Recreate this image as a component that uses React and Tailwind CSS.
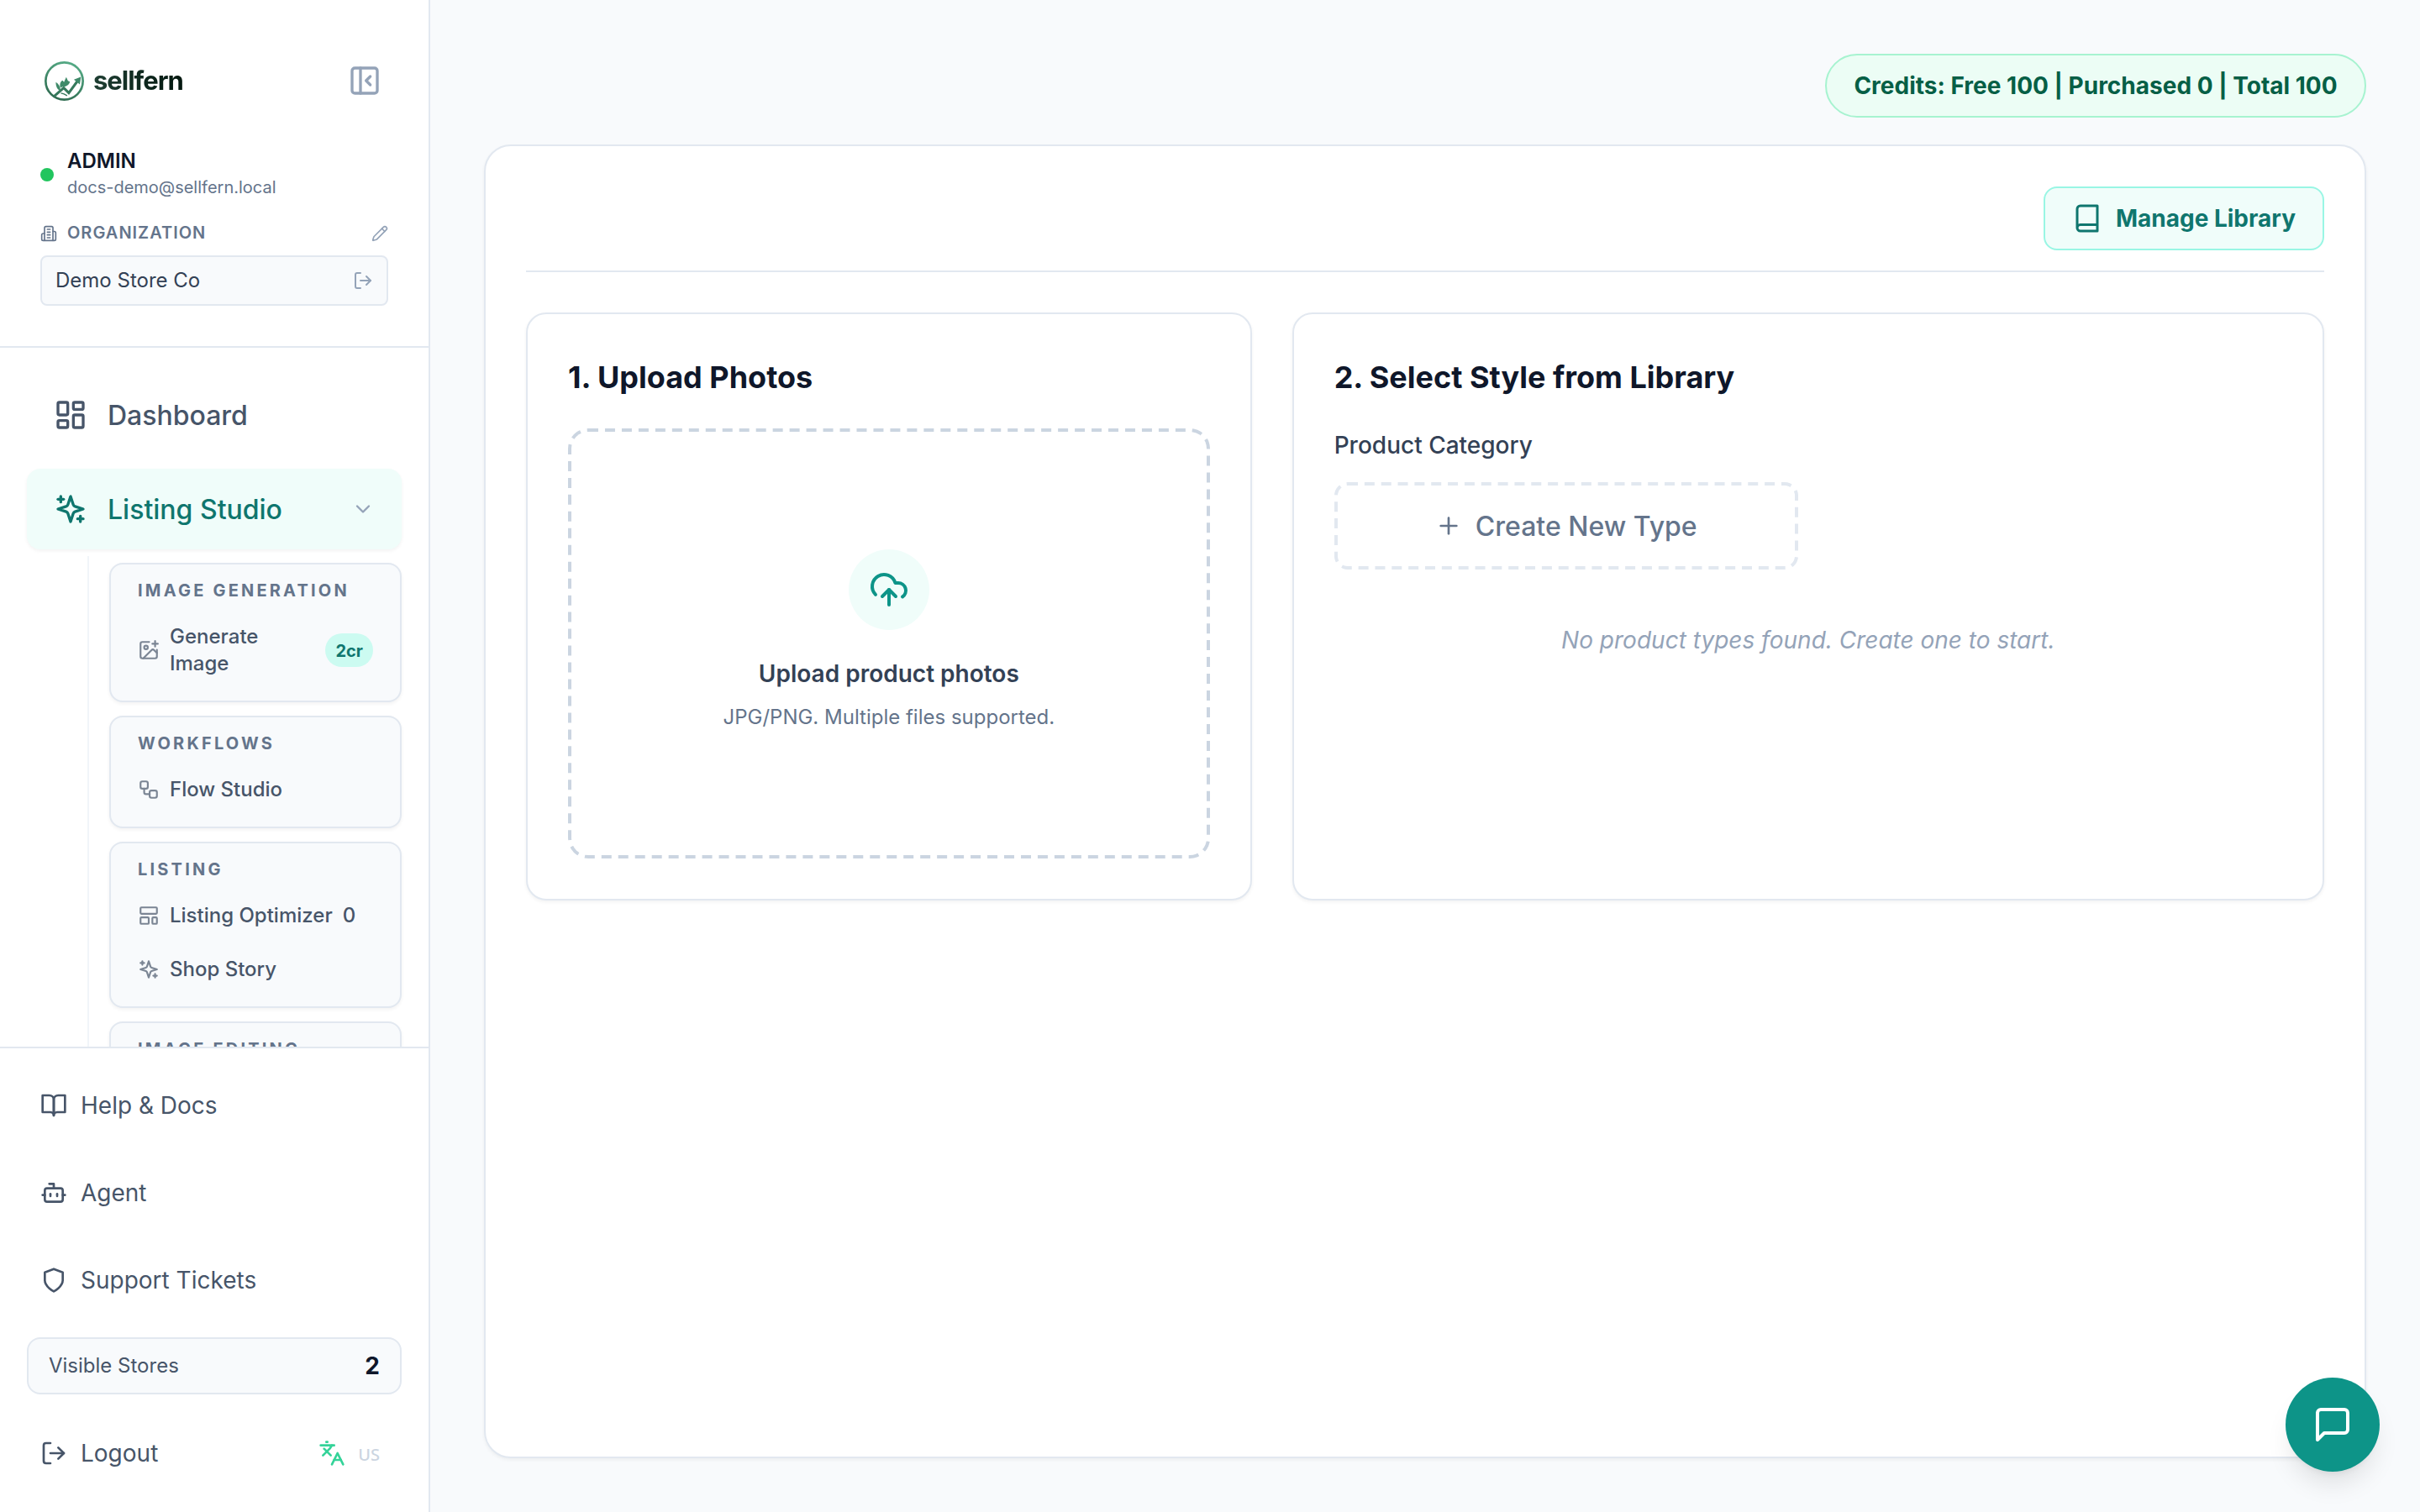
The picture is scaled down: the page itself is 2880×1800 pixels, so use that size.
import React from "react";
import {
  Bot,
  ChevronDown,
  ImagePlus,
  Languages,
  LayoutTemplate,
  LogOut,
  PanelLeftClose,
  Pencil,
  Plus,
  Workflow,
} from "lucide-react";

function Icon({ className, children }) {
  return (
    <svg
      viewBox="0 0 24 24"
      fill="none"
      stroke="currentColor"
      strokeWidth="2"
      strokeLinecap="round"
      strokeLinejoin="round"
      className={className}
    >
      {children}
    </svg>
  );
}

const DashboardIcon = ({ className }) => (
  <Icon className={className}>
    <rect width="7" height="9" x="3" y="3" rx="1" />
    <rect width="7" height="5" x="14" y="3" rx="1" />
    <rect width="7" height="9" x="14" y="12" rx="1" />
    <rect width="7" height="5" x="3" y="16" rx="1" />
  </Icon>
);

const SparklesIcon = ({ className }) => (
  <Icon className={className}>
    <path d="m12 3-1.912 5.813a2 2 0 0 1-1.275 1.275L3 12l5.813 1.912a2 2 0 0 1 1.275 1.275L12 21l1.912-5.813a2 2 0 0 1 1.275-1.275L21 12l-5.813-1.912a2 2 0 0 1-1.275-1.275L12 3Z" />
    <path d="M5 3v4" />
    <path d="M19 17v4" />
    <path d="M3 5h4" />
    <path d="M17 19h4" />
  </Icon>
);

const BuildingIcon = ({ className }) => (
  <Icon className={className}>
    <path d="M6 22V4a2 2 0 0 1 2-2h8a2 2 0 0 1 2 2v18Z" />
    <path d="M6 12H4a2 2 0 0 0-2 2v6a2 2 0 0 0 2 2h2" />
    <path d="M18 9h2a2 2 0 0 1 2 2v9a2 2 0 0 1-2 2h-2" />
    <path d="M10 6h4" />
    <path d="M10 10h4" />
    <path d="M10 14h4" />
    <path d="M10 18h4" />
  </Icon>
);

const BookOpenIcon = ({ className }) => (
  <Icon className={className}>
    <path d="M2 3h6a4 4 0 0 1 4 4v14a3 3 0 0 0-3-3H2z" />
    <path d="M22 3h-6a4 4 0 0 0-4 4v14a3 3 0 0 1 3-3h7z" />
  </Icon>
);

const ShieldIcon = ({ className }) => (
  <Icon className={className}>
    <path d="M12 22s8-4 8-10V5l-8-3-8 3v7c0 6 8 10 8 10" />
  </Icon>
);

const BookIcon = ({ className }) => (
  <Icon className={className}>
    <path d="M4 19.5v-15A2.5 2.5 0 0 1 6.5 2H20v20H6.5a2.5 2.5 0 0 1 0-5H20" />
  </Icon>
);

const UploadCloudIcon = ({ className }) => (
  <Icon className={className}>
    <path d="M4 14.899A7 7 0 1 1 15.71 8h1.79a4.5 4.5 0 0 1 2.5 8.242" />
    <path d="M12 12v9" />
    <path d="m16 16-4-4-4 4" />
  </Icon>
);

const MessageIcon = ({ className }) => (
  <Icon className={className}>
    <path d="M21 15a2 2 0 0 1-2 2H7l-4 4V5a2 2 0 0 1 2-2h14a2 2 0 0 1 2 2z" />
  </Icon>
);

function BrandMark() {
  return (
    <svg viewBox="0 0 140 140" className="size-[47px]" fill="none">
      <defs>
        <linearGradient id="fern" x1="0.7" y1="0" x2="0.3" y2="1">
          <stop offset="0" stopColor="#55ab86" />
          <stop offset="1" stopColor="#2f6b50" />
        </linearGradient>
      </defs>
      <circle cx="70" cy="70" r="66" stroke="url(#fern)" strokeWidth="8" />
      <path d="M34 124 L68 94 L86 112 L119 67" stroke="#36795c" strokeWidth="9" />
      <path d="M104 65 L129 55 L125 82 Z" fill="#3f8a69" />
      <path d="M40 74 C50 80 56 90 57 106 C45 100 40 90 40 74 Z" fill="#3f8a69" />
      <path d="M56 94 C53 82 56 72 64 68 L69 74 L77 56 L83 69 L90 72 C87 84 76 90 64 90 Z" fill="#3f8a69" />
      <path d="M58 113 L69 116 L80 122" stroke="#36795c" strokeWidth="4" />
    </svg>
  );
}

/* A 2px dashed outline drawn at double scale, so the dashes stay long and airy. */
function DashedOutline({ className }) {
  return (
    <span
      aria-hidden="true"
      className={
        "pointer-events-none absolute top-0 left-0 h-1/2 w-1/2 origin-top-left scale-200 border-2 border-dashed " +
        className
      }
    />
  );
}

function SubItem({ icon: I, children, trailing }) {
  return (
    <div className="flex items-center gap-3 px-5 py-4 text-[24px] leading-[32px] font-medium text-[#475569]">
      <I className="size-[26px] shrink-0 opacity-70" />
      <span>{children}</span>
      {trailing}
    </div>
  );
}

function Group({ title, children }) {
  return (
    <section className="rounded-2xl border-2 border-[#e2e8f0] bg-[#f8fafc] p-3 shadow-[0_2px_4px_rgba(0,0,0,0.05)]">
      <h3 className="px-5 pt-1 pb-2 text-[20px] leading-[30px] font-bold tracking-[0.16em] text-[#64748b]">
        {title}
      </h3>
      {children}
    </section>
  );
}

function FooterLink({ icon: I, children }) {
  return (
    <div className="flex h-[88px] items-center gap-4 px-4 text-[28px] leading-[40px] text-[#475569]">
      <I className="size-8 shrink-0" />
      <span>{children}</span>
    </div>
  );
}

function Sidebar() {
  return (
    <aside className="flex h-full w-[512px] shrink-0 flex-col border-r-2 border-[#e2e8f0] bg-white">
      <header className="h-[414px] shrink-0 border-b-2 border-[#e2e8f0] px-12 pt-[68px]">
        <div className="flex h-14 items-center justify-between">
          <div className="flex items-center gap-[11px] pl-[5px]">
            <BrandMark />
            <span className="bg-linear-to-r from-[#1f3f33] to-[#04170f] bg-clip-text text-[31px] leading-[40px] font-bold tracking-[-0.033em] text-transparent">
              sellfern
            </span>
          </div>
          <PanelLeftClose className="mr-2 size-10 text-[#94a3b8]" />
        </div>

        <div className="mt-[52px] flex h-16 items-center gap-4">
          <span className="size-4 rounded-full bg-[#22c55e]" />
          <div className="pb-0.5">
            <div className="text-[24px] leading-[32px] font-semibold text-[#0f172a]">ADMIN</div>
            <div className="text-[20px] leading-[30px] text-[#64748b]">docs-demo@sellfern.local</div>
          </div>
        </div>

        <div className="mt-[22px] flex h-8 items-center gap-3 text-[#64748b]">
          <BuildingIcon className="size-5" />
          <span className="pb-0.5 text-[20px] leading-[30px] font-semibold tracking-[0.05em]">ORGANIZATION</span>
          <Pencil className="ml-auto size-5 text-[#94a3b8]" />
        </div>

        <div className="mt-[10px] flex h-[60px] items-center justify-between rounded-lg border-2 border-[#e2e8f0] bg-[#f8fafc] px-4">
          <span className="text-[24px] leading-[32px] text-[#334155]">Demo Store Co</span>
          <LogOut className="size-6 text-[#94a3b8]" />
        </div>
      </header>

      <nav className="min-h-0 flex-1 overflow-hidden px-8 pt-8">
        <div className="flex h-24 items-center gap-6 px-8 text-[32px] leading-[48px] font-medium text-[#475569]">
          <DashboardIcon className="size-10" />
          <span className="pt-px">Dashboard</span>
        </div>
        <div className="mt-4 flex h-24 items-center gap-6 rounded-2xl bg-[#f0fdfa] px-8 text-[32px] leading-[48px] font-medium text-[#0f766e] shadow-[0_2px_4px_rgba(0,0,0,0.05)]">
          <SparklesIcon className="size-10" />
          <span className="pt-px">Listing Studio</span>
          <ChevronDown className="ml-auto size-7 text-[#94a3b8]" />
        </div>
        <div className="mt-2 ml-[72px] flex flex-col gap-4 border-l-2 border-[#f1f5f9] pt-2 pl-6">
          <Group title="IMAGE GENERATION">
            <SubItem
              icon={ImagePlus}
              trailing={
                <span className="ml-auto flex h-10 items-center rounded-full bg-[#ccfbf1] px-3 pt-0.5 text-[20px] leading-[30px] font-bold text-[#0f766e]">
                  2cr
                </span>
              }
            >
              Generate
              <br />
              Image
            </SubItem>
          </Group>
          <Group title="WORKFLOWS">
            <SubItem icon={Workflow}>Flow Studio</SubItem>
          </Group>
          <Group title="LISTING">
            <SubItem icon={LayoutTemplate} trailing={<span>0</span>}>
              Listing Optimizer
            </SubItem>
            <SubItem icon={SparklesIcon}>Shop Story</SubItem>
          </Group>
          <Group title="IMAGE EDITING" />
        </div>
      </nav>

      <footer className="h-[554px] shrink-0 border-t-2 border-[#e2e8f0] px-8 pt-6">
        <div className="flex flex-col gap-4">
          <FooterLink icon={BookOpenIcon}>Help &amp; Docs</FooterLink>
          <FooterLink icon={Bot}>Agent</FooterLink>
          <FooterLink icon={ShieldIcon}>Support Tickets</FooterLink>
        </div>
        <div className="mt-6 flex h-[68px] items-center justify-between rounded-2xl border-2 border-[#e2e8f0] bg-[#f8fafc] px-6">
          <span className="text-[24px] leading-[32px] text-[#475569]">Visible Stores</span>
          <span className="text-[28px] leading-[40px] font-bold text-[#0f172a]">2</span>
        </div>
        <div className="mt-[26px] flex items-center justify-between pr-[26px]">
          <FooterLink icon={LogOut}>Logout</FooterLink>
          <div className="flex items-center gap-[15px]">
            <Languages className="size-8 text-[#34d399]" />
            <span className="pt-1 font-['Noto_Sans',sans-serif] text-[20px] leading-[28px] font-medium text-[#cbd5e1]">
              US
            </span>
          </div>
        </div>
      </footer>
    </aside>
  );
}

function Panel({ title, className, children }) {
  return (
    <section
      className={
        "flex h-[700px] flex-col rounded-3xl border-2 border-[#e2e8f0] bg-white p-12 shadow-[0_2px_4px_rgba(0,0,0,0.05)] " +
        className
      }
    >
      <h2 className="mb-[34px] text-[36px] leading-[54px] font-bold text-[#0f172a]">{title}</h2>
      {children}
    </section>
  );
}

export default function App() {
  return (
    <div className="flex h-[1800px] w-[2880px] overflow-hidden bg-[#f8fafc] font-['Inter',sans-serif] text-[#0f172a]">
      <Sidebar />
      <main className="flex min-w-0 flex-1 flex-col p-16">
        <div className="flex justify-end">
          <div className="flex h-[76px] w-[644px] items-center justify-center rounded-full border-2 border-[#a7f3d0] bg-[#ecfdf5] text-[28px] leading-[40px] font-bold whitespace-nowrap text-[#065f46]">
            Credits: Free 100 | Purchased 0 | Total 100
          </div>
        </div>

        <div className="mt-8 flex-1 rounded-4xl border-2 border-[#e2e8f0] bg-white p-12 shadow-[0_2px_4px_rgba(0,0,0,0.05)]">
          <div className="flex justify-end border-b-2 border-[#e2e8f0] pb-6">
            <button className="flex h-[76px] items-center gap-4 rounded-2xl border-2 border-[#99f6e4] bg-[#f0fdfa] px-8 text-[28px] leading-[40px] font-bold text-[#0f766e]">
              <BookIcon className="size-9" />
              Manage Library
            </button>
          </div>

          <div className="mt-12 grid grid-cols-12 gap-12">
            <Panel title="1. Upload Photos" className="col-span-5">
              <div className="relative flex flex-1 flex-col items-center justify-center pb-2">
                <DashedOutline className="rounded-xl border-[#cbd5e1]" />
                <div className="mb-8 flex size-24 items-center justify-center rounded-full bg-[#f0fdfa] text-[#0d9488]">
                  <UploadCloudIcon className="size-12" />
                </div>
                <p className="text-[28px] leading-[40px] font-semibold text-[#334155]">Upload product photos</p>
                <p className="mt-4 text-[24px] leading-[32px] text-[#64748b]">JPG/PNG. Multiple files supported.</p>
              </div>
            </Panel>

            <Panel title="2. Select Style from Library" className="col-span-7">
              <p className="text-[28px] leading-[40px] font-medium text-[#334155]">Product Category</p>
              <div className="mt-6 grid grid-cols-2 gap-6">
                <button className="relative flex h-[104px] items-center justify-center gap-4 rounded-2xl text-[32px] leading-[48px] font-medium text-[#64748b]">
                  <DashedOutline className="rounded-lg border-[#e2e8f0]" />
                  <Plus className="size-8" />
                  <span className="pt-px">Create New Type</span>
                </button>
              </div>
              <p className="mt-16 text-center text-[28px] leading-[40px] text-[#94a3b8] italic">
                No product types found. Create one to start.
              </p>
            </Panel>
          </div>
        </div>
      </main>

      <button className="fixed right-12 bottom-12 flex size-28 items-center justify-center rounded-full bg-[#0d9488] text-white shadow-[0_20px_30px_-6px_rgba(0,0,0,0.1),0_8px_12px_-8px_rgba(0,0,0,0.1)]">
        <MessageIcon className="size-12" />
      </button>
    </div>
  );
}
